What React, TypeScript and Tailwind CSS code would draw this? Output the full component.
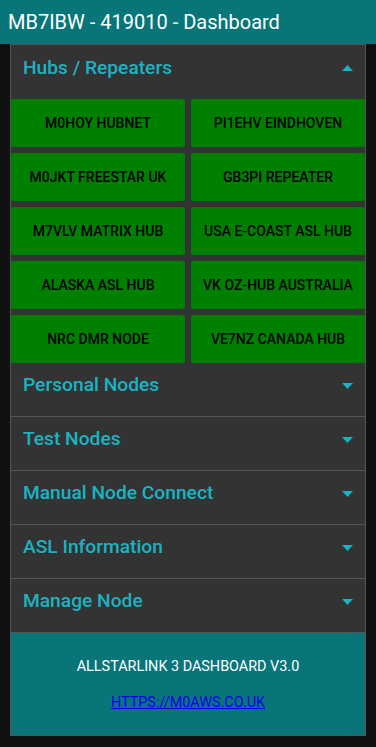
import React from "react";

const hubs = [
  "M0HOY HUBNET",
  "PI1EHV EINDHOVEN",
  "M0JKT FREESTAR UK",
  "GB3PI REPEATER",
  "M7VLV MATRIX HUB",
  "USA E-COAST ASL HUB",
  "ALASKA ASL HUB",
  "VK OZ-HUB AUSTRALIA",
  "NRC DMR NODE",
  "VE7NZ CANADA HUB",
];

const sections = [
  "Personal Nodes",
  "Test Nodes",
  "Manual Node Connect",
  "ASL Information",
  "Manage Node",
];

const Caret: React.FC<{ up?: boolean }> = ({ up }) => (
  <svg width="11" height="6" viewBox="0 0 11 6" className="mr-[12px]">
    {up ? (
      <polygon points="0,6 5.5,0 11,6" fill="#1ab3c3" />
    ) : (
      <polygon points="0,0 11,0 5.5,6" fill="#1ab3c3" />
    )}
  </svg>
);

const SectionHeader: React.FC<{ title: string; open?: boolean }> = ({
  title,
  open,
}) => (
  <div
    className={`flex items-center justify-between h-[54px] pl-3 pb-2 ${
      open ? "" : "border-b border-[#555]"
    }`}
  >
    <span className="text-[19.2px] font-medium text-[#1ab3c3]">{title}</span>
    <Caret up={open} />
  </div>
);

export default function App() {
  return (
    <div
      className="min-h-[747px] bg-[#111111]"
      style={{ fontFamily: "Roboto, 'Noto Sans', sans-serif" }}
    >
      {/* Title bar */}
      <div className="h-[44px] bg-[#087579] flex items-center pl-2">
        <h1 className="text-[20px] text-white leading-none">
          MB7IBW - 419010 - Dashboard
        </h1>
      </div>

      {/* Accordion */}
      <div className="mx-[10px] w-[356px] border border-[#555] bg-[#333333]">
        <SectionHeader title="Hubs / Repeaters" open />
        <div className="grid grid-cols-2 gap-[6px]">
          {hubs.map((hub) => (
            <button
              key={hub}
              className="h-[48px] rounded-[2px] bg-[#008000] text-black text-[14px] font-medium"
            >
              {hub}
            </button>
          ))}
        </div>

        {sections.map((s) => (
          <SectionHeader key={s} title={s} />
        ))}

        {/* Footer */}
        <div className="bg-[#087579] h-[102px] flex flex-col items-center pt-[27px] gap-[22px] text-[14.4px]">
          <p className="text-white leading-none">ALLSTARLINK 3 DASHBOARD V3.0</p>
          <a href="#" className="text-[#0000ee] underline leading-none">
            HTTPS://M0AWS.CO.UK
          </a>
        </div>
      </div>
    </div>
  );
}
